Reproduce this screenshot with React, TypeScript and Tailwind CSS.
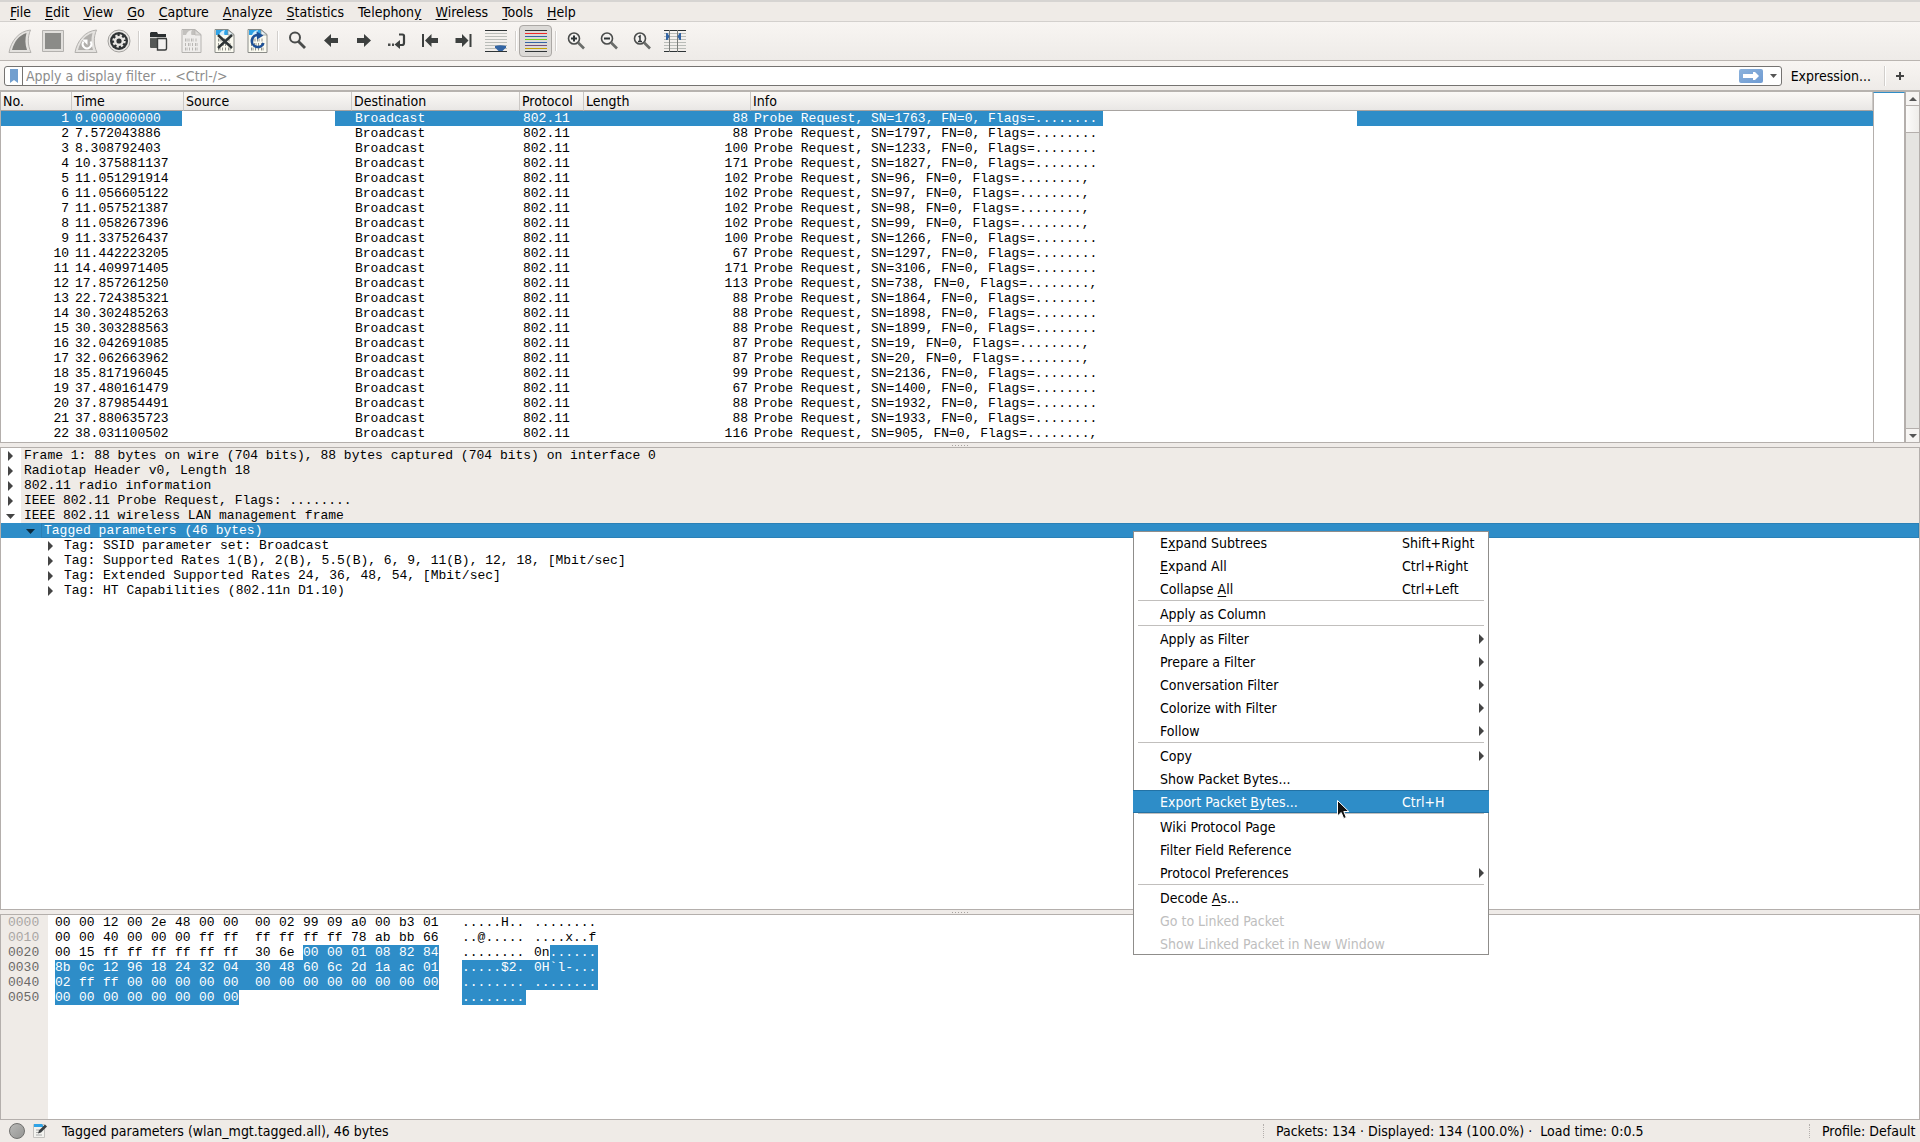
import type { ReactNode } from "react";

const menus = [
  ["", "F", "ile"],
  ["", "E", "dit"],
  ["", "V", "iew"],
  ["", "G", "o"],
  ["", "C", "apture"],
  ["", "A", "nalyze"],
  ["", "S", "tatistics"],
  ["Telephon", "y", ""],
  ["", "W", "ireless"],
  ["", "T", "ools"],
  ["", "H", "elp"],
];

type Packet = { no: number; time: string; length: number; sn: number; end: string };

const packets: Packet[] = [
  { no: 1, time: "0.000000000", length: 88, sn: 1763, end: "." },
  { no: 2, time: "7.572043886", length: 88, sn: 1797, end: "." },
  { no: 3, time: "8.308792403", length: 100, sn: 1233, end: "." },
  { no: 4, time: "10.375881137", length: 171, sn: 1827, end: "." },
  { no: 5, time: "11.051291914", length: 102, sn: 96, end: ".," },
  { no: 6, time: "11.056605122", length: 102, sn: 97, end: ".," },
  { no: 7, time: "11.057521387", length: 102, sn: 98, end: ".," },
  { no: 8, time: "11.058267396", length: 102, sn: 99, end: ".," },
  { no: 9, time: "11.337526437", length: 100, sn: 1266, end: "." },
  { no: 10, time: "11.442223205", length: 67, sn: 1297, end: "." },
  { no: 11, time: "14.409971405", length: 171, sn: 3106, end: "." },
  { no: 12, time: "17.857261250", length: 113, sn: 738, end: ".," },
  { no: 13, time: "22.724385321", length: 88, sn: 1864, end: "." },
  { no: 14, time: "30.302485263", length: 88, sn: 1898, end: "." },
  { no: 15, time: "30.303288563", length: 88, sn: 1899, end: "." },
  { no: 16, time: "32.042691085", length: 87, sn: 19, end: ".," },
  { no: 17, time: "32.062663962", length: 87, sn: 20, end: ".," },
  { no: 18, time: "35.817196045", length: 99, sn: 2136, end: "." },
  { no: 19, time: "37.480161479", length: 67, sn: 1400, end: "." },
  { no: 20, time: "37.879854491", length: 88, sn: 1932, end: "." },
  { no: 21, time: "37.880635723", length: 88, sn: 1933, end: "." },
  { no: 22, time: "38.031100502", length: 116, sn: 905, end: ".," },
];

const protocolTree = [
  "Frame 1: 88 bytes on wire (704 bits), 88 bytes captured (704 bits) on interface 0",
  "Radiotap Header v0, Length 18",
  "802.11 radio information",
  "IEEE 802.11 Probe Request, Flags: ........",
];

const tags = [
  "Tag: SSID parameter set: Broadcast",
  "Tag: Supported Rates 1(B), 2(B), 5.5(B), 6, 9, 11(B), 12, 18, [Mbit/sec]",
  "Tag: Extended Supported Rates 24, 36, 48, 54, [Mbit/sec]",
  "Tag: HT Capabilities (802.11n D1.10)",
];

// from = index of the first selected byte in the line, 16 when none is
const hexLines = [
  { offset: "0000", bytes: "00 00 12 00 2e 48 00 00 00 02 99 09 a0 00 b3 01", ascii: [".....H..", "........"], from: 16 },
  { offset: "0010", bytes: "00 00 40 00 00 00 ff ff ff ff ff ff 78 ab bb 66", ascii: ["..@.....", "....x..f"], from: 16 },
  { offset: "0020", bytes: "00 15 ff ff ff ff ff ff 30 6e 00 00 01 08 82 84", ascii: ["........", "0n......"], from: 10 },
  { offset: "0030", bytes: "8b 0c 12 96 18 24 32 04 30 48 60 6c 2d 1a ac 01", ascii: [".....$2.", "0H`l-..."], from: 0 },
  { offset: "0040", bytes: "02 ff ff 00 00 00 00 00 00 00 00 00 00 00 00 00", ascii: ["........", "........"], from: 0 },
  { offset: "0050", bytes: "00 00 00 00 00 00 00 00", ascii: ["........", ""], from: 0 },
];

type Item = { label: ReactNode; keys?: string; sub?: boolean; active?: boolean; disabled?: boolean };

const contextMenu: Item[][] = [
  [
    { label: <>E<u>x</u>pand Subtrees</>, keys: "Shift+Right" },
    { label: <><u>E</u>xpand All</>, keys: "Ctrl+Right" },
    { label: <>Collapse <u>A</u>ll</>, keys: "Ctrl+Left" },
  ],
  [{ label: "Apply as Column" }],
  [
    { label: "Apply as Filter", sub: true },
    { label: "Prepare a Filter", sub: true },
    { label: "Conversation Filter", sub: true },
    { label: "Colorize with Filter", sub: true },
    { label: "Follow", sub: true },
  ],
  [
    { label: "Copy", sub: true },
    { label: "Show Packet Bytes..." },
    { label: <>Export Packet <u>B</u>ytes...</>, keys: "Ctrl+H", active: true },
  ],
  [
    { label: "Wiki Protocol Page" },
    { label: "Filter Field Reference" },
    { label: "Protocol Preferences", sub: true },
  ],
  [
    { label: <>Decode <u>A</u>s...</> },
    { label: "Go to Linked Packet", disabled: true },
    { label: "Show Linked Packet in New Window", disabled: true },
  ],
];

function Icon({ children }: { children: ReactNode }) {
  return (
    <svg viewBox="0 0 24 24" className="size-6 shrink-0" fill="none" aria-hidden="true">
      {children}
    </svg>
  );
}

function ToolButton({ label, pressed, children }: { label: string; pressed?: boolean; children: ReactNode }) {
  return (
    <button
      type="button"
      aria-label={label}
      className={
        "flex h-8 w-[33px] items-center justify-center rounded-sm border " +
        (pressed ? "border-[#aba8a5] bg-[#dcdad7]" : "border-transparent")
      }
    >
      <Icon>{children}</Icon>
    </button>
  );
}

function ToolSeparator() {
  return (
    <div className="flex w-[7px] justify-center">
      <div className="h-5 w-px bg-[#d2cfcc]" />
      <div className="h-5 w-px bg-white" />
    </div>
  );
}

function FilePage({ dim, children }: { dim?: boolean; children?: ReactNode }) {
  return (
    <>
      <path d="M2.5 .5h13l6 5v18h-19z" transform="translate(-.5 0)" fill={dim ? "#efedeb" : "#fbfaf0"} stroke={dim ? "#b5b3b0" : "#8a8c88"} />
      <path d="M3 1h12v5H3z" fill={dim ? "#c3c1be" : "#2fa3e6"} />
      <path d="M6 6c1-3 3-4.500 6-5-1 2-1 3-.5 5z" fill={dim ? "#efedeb" : "#d6eefb"} />
      <path d="M15 1v5h6z" fill={dim ? "#dddbd8" : "#e6f3fa"} stroke={dim ? "#b5b3b0" : "#8a8c88"} strokeWidth=".7" />
      <path
        d="M5 11h2.500M8.500 11h1M11 11h2.500M15.500 11h1M5 15.500h1M8 15.500h2.500M12 15.500h1M15 15.500h2.500M5 20h2.500M9 20h1M12 20h1M15 20h2.500"
        stroke={dim ? "#b9b7b4" : "#8f918b"}
        strokeWidth="3.200"
        strokeDasharray="1.200 .6"
      />
      {children}
    </>
  );
}

function Magnifier({ children }: { children?: ReactNode }) {
  return (
    <>
      <circle cx="10" cy="9.500" r="5.500" fill="#f4f2f0" stroke="#4a4c4b" strokeWidth="1.600" />
      <path d="M14 13.500l6 6" stroke="#6a6c6a" strokeWidth="2.600" />
      {children}
    </>
  );
}

function Lines({ colors }: { colors: string[] }) {
  return (
    <>
      {colors.map((c, i) => (
        <path key={i} d={`M1 ${1.5 + i * 3}h22`} stroke={c} />
      ))}
    </>
  );
}

const grey = "#b9bcb8";
const dark = "#2e3436";

function Toolbar() {
  return (
    <div className="flex h-[39px] items-center border-b border-[#bab5b1] bg-linear-to-b from-[#f8f5f2] to-[#eeebe8] pl-[3px]">
      <ToolButton label="Start capturing">
        <path d="M1 23.500C3 12 11 2 22.500 1c-3 7-3 15 .5 22.500z" fill="#e4e2df" stroke="#b3b1ae" />
        <path d="M4 21C6.500 12 11 6.500 18.500 4c-1.500 6-1.500 11 .5 17z" fill="#7f7f7c" />
      </ToolButton>
      <ToolButton label="Stop capturing">
        <path d="M1.500 1.500h21v21h-21z" fill="#e1dfdc" stroke="#b3b1ae" />
        <path d="M4 4h16v16H4z" fill="#8b8b88" />
      </ToolButton>
      <ToolButton label="Restart capture">
        <path d="M1 23.500C3 12 11 2 22.500 1c-3 7-3 15 .5 22.500z" fill="#e4e2df" stroke="#b3b1ae" />
        <path d="M4 21C6.500 12 11 6.500 18.500 4c-1.500 6-1.500 11 .5 17z" fill="#b1afac" />
        <path d="M9.500 12.500a4.300 4.300 0 1 0 7 0" stroke="#fff" strokeWidth="2" />
        <path d="M8 10.500h5.500V16z" fill="#fff" />
      </ToolButton>
      <ToolButton label="Capture options">
        <circle cx="12" cy="12" r="11" fill="#e9e7e4" stroke="#a3a19e" />
        <circle cx="12" cy="12" r="9" fill="#2f3335" />
        <circle cx="12" cy="12" r="5" stroke="#e9e7e4" strokeWidth="3.400" strokeDasharray="2 1.930" />
        <circle cx="12" cy="12" r="3.800" stroke="#e9e7e4" strokeWidth="2.400" />
      </ToolButton>
      <ToolSeparator />
      <ToolButton label="Open">
        <path d="M3 4l1-1h6l1 2h8v3H3z" fill="#2b2f30" />
        <path d="M3 9h17v9q0 1-1 1H4q-1 0-1-1z" fill="#555856" />
        <path d="M3 9h17" stroke="#8b8d8b" strokeWidth=".6" />
        <path d="M10.500 9.500h8q1 0 1 1v9q0 1.500-1.500 1.500h-7.500z" fill="#f2f1ef" stroke="#3a3d3c" strokeWidth="1.400" />
      </ToolButton>
      <ToolButton label="Save">
        <FilePage dim />
      </ToolButton>
      <ToolButton label="Close file">
        <FilePage>
          <path d="M5 6l14 13M19 6L5 19" stroke={dark} strokeWidth="2.400" />
        </FilePage>
      </ToolButton>
      <ToolButton label="Reload file">
        <FilePage>
          <path d="M17.500 14a6 6 0 1 1-5-8" stroke="#1d5097" strokeWidth="2.600" />
          <path d="M10.500 2.500l7 4-6.500 4z" fill="#1d5097" />
        </FilePage>
      </ToolButton>
      <ToolSeparator />
      <ToolButton label="Find packet">
        <circle cx="9" cy="8.500" r="5" stroke="#4a4c4b" strokeWidth="2" />
        <path d="M12.500 12.500l6.500 6.500" stroke="#4a4c4b" strokeWidth="2.800" />
      </ToolButton>
      <ToolButton label="Previous packet">
        <path d="M5 11.500l7-6.500v4h7v5h-7v4z" fill="#3d403f" />
      </ToolButton>
      <ToolButton label="Next packet">
        <path d="M19 11.500L12 5v4H5v5h7v4z" fill="#3d403f" />
      </ToolButton>
      <ToolButton label="Go to packet">
        <path d="M3 14.500h2.500V17H3zM7 14.500h2V17H7z" fill="#4a4c4b" />
        <path d="M14 5.500h3.500q1.500 0 1.500 1.500v7q0 2-2 2h-2" stroke="#3d403f" strokeWidth="2.200" />
        <path d="M9.500 15.500l5.500-4.500v9z" fill="#3d403f" />
      </ToolButton>
      <ToolButton label="First packet">
        <path d="M4 5h2v13H4zM7 11.500L13.500 5v4H20v5h-6.500v4z" fill="#3d403f" />
      </ToolButton>
      <ToolButton label="Last packet">
        <path d="M18.500 5h2v13h-2zM17.500 11.500L11 5v4H4.500v5H11v4z" fill="#3d403f" />
      </ToolButton>
      <ToolButton label="Auto scroll">
        <Lines colors={[dark, grey, grey, grey, grey, grey, grey, dark]} />
        <path d="M11 17q5-1.500 11 0v1.500L18.500 22h-4L11 18.500z" fill="#3465a4" />
      </ToolButton>
      <ToolSeparator />
      <ToolButton label="Colorize" pressed>
        <Lines colors={[dark, "#ef2929", "#3465a4", "#73d216", "#3465a4", "#75507b", "#c4a000", dark]} />
      </ToolButton>
      <ToolSeparator />
      <ToolButton label="Zoom in">
        <Magnifier>
          <path d="M7 9.500h6M10 6.500v6" stroke={dark} strokeWidth="2" />
        </Magnifier>
      </ToolButton>
      <ToolButton label="Zoom out">
        <Magnifier>
          <path d="M7 9.500h6" stroke={dark} strokeWidth="2" />
        </Magnifier>
      </ToolButton>
      <ToolButton label="Normal size">
        <Magnifier>
          <path d="M8.500 8l1.500-1v5.500M8 12.500h4" stroke={dark} strokeWidth="1.500" />
        </Magnifier>
      </ToolButton>
      <ToolButton label="Resize columns">
        <Lines colors={[dark, grey, grey, grey, grey, grey, grey, dark]} />
        <path d="M6.500 1v22M14.500 1v22" stroke="#7b7d7a" />
        <path d="M3 4h1.500l2 3.500-2 3.500H3zM18 4h-1.500l-2 3.500 2 3.500H18z" fill="#3465a4" />
      </ToolButton>
    </div>
  );
}

function FilterBar() {
  return (
    <div className="flex h-[31px] items-center border-b-2 border-[#b7b3af] bg-linear-to-b from-[#f8f5f2] to-[#eeebe8] pl-1">
      <div className="flex h-5 flex-1 items-center rounded-[3px] border border-[#757371] bg-white">
        <button type="button" aria-label="Filter bookmarks" className="flex h-full w-[18px] items-center justify-center border-r border-[#757371]">
          <svg viewBox="0 0 8 14" className="h-3.5 w-2" aria-hidden="true">
            <path d="M0 0h8v14L4 11l-4 3z" fill="#729fcf" />
          </svg>
        </button>
        <input
          type="text"
          aria-label="Display filter"
          placeholder="Apply a display filter ... <Ctrl-/>"
          className="h-full min-w-0 flex-1 pl-[3px] outline-none placeholder:text-[#8c8c8c]"
        />
        <button type="button" aria-label="Apply filter" className="flex h-3.5 w-6 items-center justify-center rounded-xs bg-linear-to-br from-[#8cb2dc] to-[#6f9bd2]">
          <svg viewBox="0 0 16 8" className="h-2 w-4" aria-hidden="true">
            <path d="M0 2h10V0h2l4 4-4 4h-2V6H0z" fill="#fff" />
          </svg>
        </button>
        <button type="button" aria-label="Recent filters" className="flex h-full w-[18px] items-center justify-center pl-1">
          <svg viewBox="0 0 7 4" className="h-1 w-[7px]" aria-hidden="true">
            <path d="M0 0h7L3.500 4z" fill="#555" />
          </svg>
        </button>
      </div>
      <button type="button" className="pr-2.5 pl-[9px]">Expression...</button>
      <ToolSeparator />
      <button type="button" aria-label="Add filter button" className="flex w-8 items-center justify-center pr-2">
        <svg viewBox="0 0 8 8" className="size-2" aria-hidden="true">
          <path d="M4 0v8M0 4h8" stroke="#444" strokeWidth="2" />
        </svg>
      </button>
    </div>
  );
}

const headCell = "truncate border-r border-[#cbc8c5] bg-linear-to-b from-[#fbf9f6] to-[#e9e7e5] p-0 pl-0.5 text-left font-normal";

function PacketList() {
  return (
    <div className="flex border border-t-0 border-[#b4afac] bg-white">
      <div className="flex-1 pb-px">
        <table className="w-full table-fixed border-separate border-spacing-0">
          <colgroup>
            <col className="w-[71px]" />
            <col className="w-28" />
            <col className="w-42" />
            <col className="w-42" />
            <col className="w-16" />
            <col className="w-[167px]" />
            <col />
          </colgroup>
          <thead>
            <tr className="h-[19px] leading-[18px] [&>th]:border-b [&>th]:border-b-[#a8a4a1]">
              {["No.", "Time", "Source", "Destination", "Protocol", "Length", "Info"].map((h) => (
                <th key={h} scope="col" className={headCell}>
                  {h}
                </th>
              ))}
            </tr>
          </thead>
          <tbody className='font-["Liberation_Mono",monospace] text-[13px] leading-[15px] whitespace-pre'>
            {packets.map((p) => (
              <tr key={p.no} className={p.no === 1 ? "h-[15px] bg-[#2e8dc8] text-white" : "h-[15px]"}>
                <td className="p-0 pr-[3px] text-right">{p.no}</td>
                <td className="p-0 pl-[3px]">{p.time}</td>
                <td className="p-0">{p.no === 1 && <div className="mr-[17px] -ml-0.5 h-[15px] bg-white" />}</td>
                <td className="p-0 pl-[3px]">Broadcast</td>
                <td className="p-0 pl-[3px]">802.11</td>
                <td className="p-0 pr-[3px] text-right">{p.length}</td>
                <td className="p-0 pl-[3px]">
                  <div className="flex">
                    <span className="w-[349px]">{`Probe Request, SN=${p.sn}, FN=0, Flags=.......${p.end}`}</span>
                    {p.no === 1 && <span className="h-[15px] w-[254px] bg-white" />}
                  </div>
                </td>
              </tr>
            ))}
          </tbody>
        </table>
      </div>
      <div className="w-8 border-x border-t border-x-[#b4afac] border-t-[#2e8dc8]" />
      <div className="flex w-3.5 flex-col border-l border-[#b4afac] bg-[#e5e4e1]">
        <button type="button" aria-label="Scroll up" className="flex h-3.5 items-center justify-center border-b border-[#b4afac] bg-[#f6f4f2]">
          <svg viewBox="0 0 8 4" className="h-1 w-2" aria-hidden="true">
            <path d="M0 4h8L4 0z" fill="#555" />
          </svg>
        </button>
        <div className="h-[27px] border-b border-[#b4afac] bg-linear-to-r from-[#fcfbfa] to-[#efedea]" />
        <button type="button" aria-label="Scroll down" className="mt-auto flex h-3.5 items-center justify-center border-t border-[#b4afac] bg-[#f6f4f2]">
          <svg viewBox="0 0 8 4" className="h-1 w-2" aria-hidden="true">
            <path d="M0 0h8L4 4z" fill="#555" />
          </svg>
        </button>
      </div>
    </div>
  );
}

function Splitter() {
  return (
    <div className="flex h-1 items-center justify-center gap-0.5 bg-[#efebe8]">
      {Array.from({ length: 6 }).map((_, i) => (
        <span key={i} className="size-px bg-[#a5a19e]" />
      ))}
    </div>
  );
}

function Arrow({ open, selected }: { open?: boolean; selected?: boolean }) {
  return (
    <span className="flex w-5 shrink-0 items-center justify-center">
      <svg viewBox="0 0 10 10" className="size-2.5" aria-hidden="true">
        {open ? <path d="M0 3h9L4.500 8z" fill={selected ? "#0b2a3d" : "#444"} /> : <path d="M2 0v10l5-5z" fill="#444" />}
      </svg>
    </span>
  );
}

function PacketDetails() {
  return (
    <ul className='flex-1 border border-[#b4afac] bg-white font-["Liberation_Mono",monospace] text-[13px] leading-[15px] whitespace-pre'>
      {protocolTree.map((line) => (
        <li key={line} className="flex">
          <Arrow />
          <span className="flex-1 bg-[#efebe7] pl-[3px]">{line}</span>
        </li>
      ))}
      <li>
        <div className="flex">
          <Arrow open />
          <span className="flex-1 bg-[#efebe7] pl-[3px]">IEEE 802.11 wireless LAN management frame</span>
        </div>
        <ul>
          <li>
            <div className="flex bg-[#2e8dc8] pl-5 text-white">
              <Arrow open selected />
              <span className="flex-1 pl-[3px] shadow-[inset_0_0_0_1px_#2a80b6]">Tagged parameters (46 bytes)</span>
            </div>
            <ul className="pl-10">
              {tags.map((tag) => (
                <li key={tag} className="flex">
                  <Arrow />
                  <span className="pl-[3px]">{tag}</span>
                </li>
              ))}
            </ul>
          </li>
        </ul>
      </li>
    </ul>
  );
}

function HexLine({ line }: { line: (typeof hexLines)[number] }) {
  const bytes = line.bytes.split(" ");
  const on = "bg-[#2e8dc8] text-white";
  return (
    <div className="flex h-[15px]">
      <div className="flex w-[407px]">
        {bytes.map((byte, i) => {
          const last = i === bytes.length - 1;
          return (
            <span key={i} className={(last ? "w-4 " : i === 7 ? "w-8 " : "w-6 ") + (i >= line.from ? on : "")}>
              {byte}
            </span>
          );
        })}
      </div>
      {line.ascii.map((text, half) => {
        const cut = Math.max(0, Math.min(8, line.from - half * 8));
        const wide = half === 0 && line.ascii[1] !== "";
        return (
          text && (
            <span key={half} className={(wide ? "w-18 " : "w-16 ") + "flex"}>
              {cut > 0 && <span>{text.slice(0, cut)}</span>}
              {cut < 8 && <span className={"flex-1 " + on}>{text.slice(cut)}</span>}
            </span>
          )
        );
      })}
    </div>
  );
}

function PacketBytes() {
  return (
    <div className='flex h-[206px] border border-[#b4afac] bg-white font-["Liberation_Mono",monospace] text-[13px] leading-[15px] whitespace-pre'>
      <div className="w-[47px] bg-[#efebe7] pl-[7px] text-[#6b6967]">
        {hexLines.map((line, i) => (
          <div key={line.offset} className={i < 2 ? "text-[#a9a6a4]" : ""}>
            {line.offset}
          </div>
        ))}
      </div>
      <div className="pl-[7px]">
        {hexLines.map((line) => (
          <HexLine key={line.offset} line={line} />
        ))}
      </div>
    </div>
  );
}

function Grip() {
  return <div className="h-3.5 border-l border-dotted border-[#b4afac]" />;
}

function StatusBar() {
  return (
    <footer className="flex h-[22px] items-center pb-px whitespace-pre">
      <button type="button" aria-label="Expert information" className="ml-[9px] size-4 rounded-full border border-[#6f6f6d] bg-linear-to-br from-[#b9b9b7] to-[#959593]" />
      <button type="button" aria-label="Capture file comment" className="ml-2">
        <svg viewBox="0 0 15 15" className="size-[15px]" aria-hidden="true">
          <path d="M.5 1.500h11v13H.5z" fill="#f3f3ef" stroke="#c4c2bf" />
          <path d="M1 1h8l2 3H1z" fill="#2fa3e6" />
          <path d="M3 7h5M3 9.500h3M3 12h6" stroke="#aaa" />
          <path d="M5 10.500l1-3L12 1.500l2 2-6 6z" fill="#3d4042" />
        </svg>
      </button>
      <span className="ml-[14px]">Tagged parameters (wlan_mgt.tagged.all), 46 bytes</span>
      <div className="ml-auto flex w-[546px] items-center gap-3">
        <Grip />
        <span>Packets: 134 · Displayed: 134 (100.0%) ·  Load time: 0:0.5</span>
      </div>
      <div className="flex w-[111px] items-center gap-3">
        <Grip />
        <span>Profile: Default</span>
      </div>
    </footer>
  );
}

function ContextMenu() {
  return (
    <div role="menu" className="absolute top-[529px] left-[1133px] w-[356px] bg-white shadow-[inset_0_0_0_1px_#8f8d8b] [&_u]:underline-offset-2">
      {contextMenu.map((group, g) => (
        <div key={g}>
          {g > 0 && <div className="mx-[5px] h-0.5 border-t border-[#c1bfbd]" />}
          {group.map((item, i) => (
            <button
              key={i}
              type="button"
              role="menuitem"
              disabled={item.disabled}
              className={
                "flex h-[23px] w-full items-center pr-[5px] pl-[27px] text-left " +
                (item.active ? "border-y border-[#2272a5] bg-[#2e8dc8] text-white" : item.disabled ? "text-[#bebebe]" : "")
              }
            >
              <span className="w-[242px]">{item.label}</span>
              <span className="flex-1">{item.keys}</span>
              {item.sub && (
                <svg viewBox="0 0 5 10" className="h-2.5 w-[5px]" aria-hidden="true">
                  <path d="M0 0v10l5-5z" fill="#444" />
                </svg>
              )}
            </button>
          ))}
        </div>
      ))}
      <svg viewBox="0 0 13 20" className="absolute top-[269px] left-[204px] h-5 w-[13px]" aria-hidden="true">
        <path d="M.5 .5v15.500l3.700-3.500 2.500 6 2.600-1-2.500-6h5z" fill="#111" stroke="#fff" />
      </svg>
    </div>
  );
}

export default function App() {
  return (
    <div className='relative flex min-h-screen flex-col border-t-2 border-[#d6d4d2] bg-[#efebe7] font-["DejaVu_Sans_Condensed","DejaVu_Sans",sans-serif] text-[14px] leading-5 text-black'>
      <nav className="flex h-5 items-center border-b border-[#d3d0cd] pl-[3px] [&_u]:underline-offset-2">
        {menus.map(([before, key, after]) => (
          <button key={before + key + after} type="button" className="px-[7px]">
            {before}
            <u>{key}</u>
            {after}
          </button>
        ))}
      </nav>
      <Toolbar />
      <FilterBar />
      <PacketList />
      <Splitter />
      <PacketDetails />
      <Splitter />
      <PacketBytes />
      <StatusBar />
      <ContextMenu />
    </div>
  );
}
